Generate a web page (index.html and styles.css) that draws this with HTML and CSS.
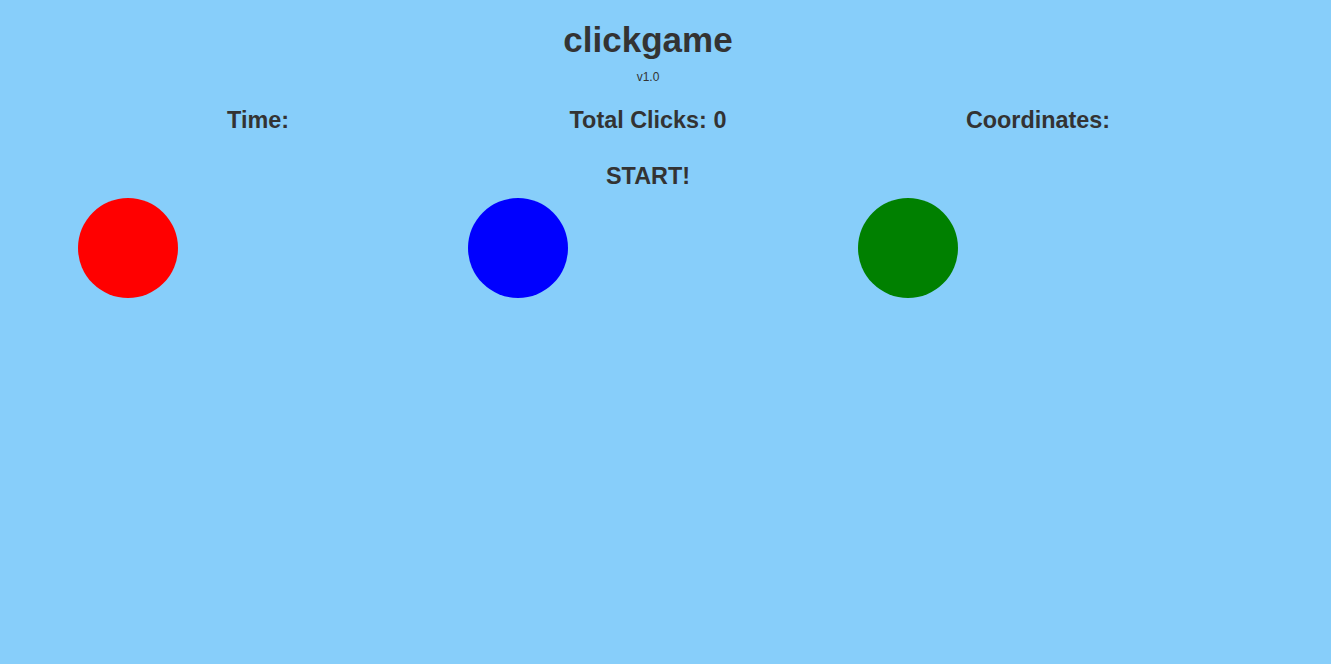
FILE: index.html
```html
<!DOCTYPE html>
<html>
<head>
<meta charset="utf-8">
<title>clickgame</title>
<link rel="stylesheet" href="styles.css">
</head>
<body>
<div class="page">
  <div class="container">
    <h1 class="title">clickgame</h1>
    <div class="version">v1.0</div>
    <div class="stats">
      <h3 class="stat">Time:</h3>
      <h3 class="stat">Total Clicks: 0</h3>
      <h3 class="stat">Coordinates:</h3>
    </div>
    <h3 class="start">START!</h3>
    <div class="circles">
      <div class="col"><div class="circle red"></div></div>
      <div class="col"><div class="circle blue"></div></div>
      <div class="col"><div class="circle green"></div></div>
    </div>
  </div>
</div>
</body>
</html>
```

FILE: styles.css
```css
html, body {
  margin: 0;
  padding: 0;
}
body {
  background: #87cefa;
  color: #333;
  font-family: "Liberation Sans", Arial, sans-serif;
  min-height: 664px;
}
.page {
  width: 1296px;
}
.container {
  width: 1170px;
  margin: 0 auto;
  text-align: center;
}
.title {
  margin: 20px 0 10px;
  font-size: 35px;
  line-height: 40px;
  font-weight: 700;
}
.version {
  margin-top: 1px;
  font-size: 12px;
  line-height: 14px;
}
.stats {
  display: grid;
  grid-template-columns: repeat(3, 1fr);
  margin-top: 23px;
}
.stat {
  margin: 0;
  font-size: 23.4px;
  line-height: 26px;
  font-weight: 700;
}
.start {
  margin: 30px 0 0;
  font-size: 23.4px;
  line-height: 26px;
  font-weight: 700;
}
.circles {
  display: grid;
  grid-template-columns: repeat(3, 1fr);
  margin-top: 9px;
}
.col {
  padding: 0 15px;
  display: flex;
}
.circle {
  width: 100px;
  height: 100px;
  border-radius: 50%;
}
.red { background: red; }
.blue { background: blue; }
.green { background: green; }
```
